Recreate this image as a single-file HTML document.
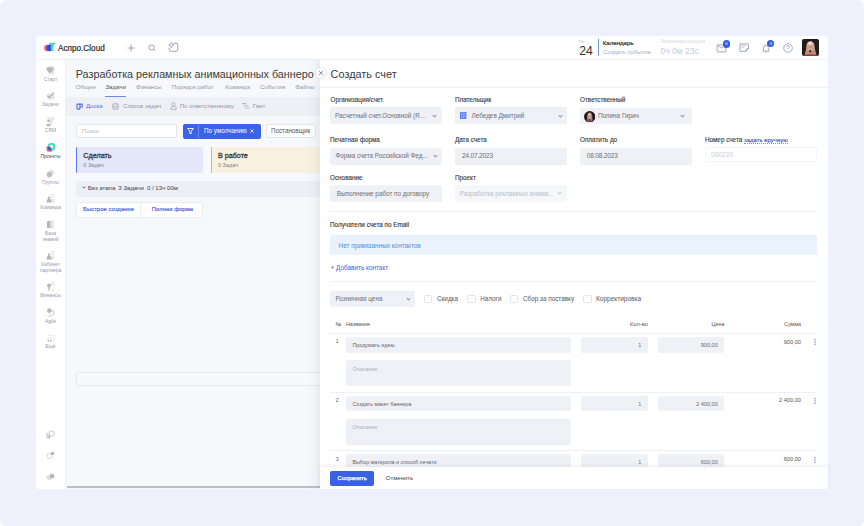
<!DOCTYPE html>
<html><head><meta charset="utf-8">
<style>
*{box-sizing:border-box}
html,body{margin:0;padding:0}
body{width:864px;height:526px;overflow:hidden;background:#fff;position:relative;font-family:"Liberation Sans",sans-serif;color:#333}
.a{position:absolute}
.t{position:absolute;white-space:nowrap;line-height:1}
#outer{left:0;top:0;width:864px;height:526px;background:#eef0fb;border-radius:6px}
#win{left:36px;top:36px;width:792px;height:453px;background:#fff;border-radius:3px;overflow:hidden}
#hdr{left:36px;top:36px;width:792px;height:24px;border-bottom:1px solid #eceef4;background:#fff;border-radius:3px 3px 0 0}
#side{left:36px;top:60px;width:30px;height:429px;background:#fff;border-right:1px solid #eef0f5;border-radius:0 0 0 3px}
#main{left:66px;top:60px;width:254px;height:429px;background:#f7f8fc;overflow:hidden}
#modal{left:320px;top:60px;width:508px;height:429px;background:#fff;border-radius:0 0 3px 0;overflow:hidden}
.lbl{font-size:6.35px;color:#3a3a3a;-webkit-text-stroke:0.12px #3a3a3a}
.inp{position:absolute;background:#f0f1f6;border-radius:2px}
.it{font-size:6.35px;color:#6c6f77}
.chev{position:absolute;width:3px;height:3px;border-right:0.8px solid #8d93a5;border-bottom:0.8px solid #8d93a5;transform:rotate(45deg)}
.sl{font-size:5px;color:#979cab;text-align:center;width:30px;left:35.5px}
.cb{position:absolute;width:8.6px;height:8.2px;border:0.8px solid #e3e5ec;border-radius:1.5px;background:#fff}
.tab{position:absolute;top:83.6px;font-size:6.1px;color:#959aa6}
.tbt{font-size:6.1px;color:#9297a3;top:102.9px}
.tb{font-size:5.4px;color:#555}
</style></head><body>
<div id="outer" class="a"></div>
<div id="win" class="a"></div>

<!-- HEADER -->
<div id="hdr" class="a"></div>
<svg class="a" style="left:42px;top:40px" width="16" height="13" viewBox="0 0 16 13">
  <circle cx="5.3" cy="8" r="3.2" fill="#fb5a78"/>
  <path d="M6.3 4.8 L7.9 2.8 L13.9 2.8 C12.6 4 11.6 5.2 11.5 6.6 C11.4 8 11.5 9.6 11.6 10.9 L8.9 10.9 L8.9 4.8 Z" fill="#3fe0b5"/>
  <path d="M9.1 4.8 L7.6 4.8 A3.2 3.2 0 0 0 7.6 11.2 L9.3 11.2 C8.7 9.2 8.7 6.8 9.1 4.8 Z" fill="#2a4ce2"/>
</svg>
<div class="t" style="left:58px;top:44.6px;font-size:8.2px;color:#2b2b2b;-webkit-text-stroke:0.2px #2b2b2b">Аспро.Cloud</div>
<svg class="a" style="left:126.5px;top:43.5px" width="8" height="8" viewBox="0 0 8 8"><path d="M4 .5V7.5M.5 4H7.5" stroke="#8f97b3" stroke-width="0.9"/></svg>
<svg class="a" style="left:147.5px;top:44.2px" width="8" height="8" viewBox="0 0 8 8"><circle cx="3.6" cy="3.5" r="2.7" fill="none" stroke="#8f97b3" stroke-width="0.9"/><path d="M5.6 5.5L6.9 6.8" stroke="#8f97b3" stroke-width="0.9" stroke-linecap="round"/></svg>
<svg class="a" style="left:168px;top:42px" width="11" height="10" viewBox="0 0 11 10"><path d="M5.4 1.3H8A1.8 1.8 0 0 1 9.8 3.1V7.5A1.8 1.8 0 0 1 8 9.3H3A1.8 1.8 0 0 1 1.2 7.5V6" fill="none" stroke="#8f97b3" stroke-width="0.9"/><path d="M3.4 0.5Q3.7 2.8 6 3.1Q3.7 3.4 3.4 5.7Q3.1 3.4 0.8 3.1Q3.1 2.8 3.4 0.5Z" fill="none" stroke="#8f97b3" stroke-width="0.75" stroke-linejoin="round"/></svg>

<div class="t" style="left:578.8px;top:39.8px;font-size:4.4px;color:#b7bcc8">Пн</div>
<div class="t" style="left:579.3px;top:44.5px;font-size:12.2px;color:#333">24</div>
<div class="a" style="left:597.5px;top:39px;width:1.2px;height:17px;background:#6a9ad9"></div>
<div class="t" style="left:602.8px;top:40.3px;font-size:6.1px;color:#2f2f2f;-webkit-text-stroke:0.2px #2f2f2f">Календарь</div>
<div class="t" style="left:603px;top:48.9px;font-size:6px;color:#a3b0c9">Создать событие</div>
<div class="t" style="left:660.6px;top:39.3px;font-size:5px;color:#d5d9e3">Запрачено сегодня</div>
<div class="t" style="left:660.5px;top:46.5px;font-size:8.3px;color:#c6ccda;letter-spacing:0.1px">0ч 0м 23с</div>

<svg class="a" style="left:716px;top:43.6px" width="11" height="9" viewBox="0 0 11 9"><rect x="1.1" y="0.9" width="8.8" height="7" rx="0.7" fill="none" stroke="#8f97b3" stroke-width="0.85"/><path d="M1.6 1.6L5.5 3.9L9.4 1.6" fill="none" stroke="#8f97b3" stroke-width="0.85"/></svg>
<div class="a" style="left:722.8px;top:40.2px;width:7.4px;height:7.4px;border-radius:50%;background:#2f5de6;color:#fff;font-size:4.2px;text-align:center;line-height:7.4px">6</div>
<svg class="a" style="left:738.5px;top:43.2px" width="10" height="9" viewBox="0 0 10 9"><path d="M1 .9H9.4V5.9L6.9 8.4H1Z" fill="none" stroke="#8f97b3" stroke-width="0.85" stroke-linejoin="round"/><path d="M2.5 2.8H7.2M2.5 4.3H4.6" fill="none" stroke="#a9b0c6" stroke-width="0.7"/><path d="M6.9 8.3V6.7A.8.8 0 0 1 7.7 5.9H9.3" fill="none" stroke="#8f97b3" stroke-width="0.8"/></svg>
<svg class="a" style="left:762px;top:43.5px" width="8" height="9" viewBox="0 0 8 9"><path d="M4 1.2a2.4 2.4 0 0 1 2.4 2.4V6l1 1H.6l1-1V3.6A2.4 2.4 0 0 1 4 1.2z M3 8h2" fill="none" stroke="#8f97b3" stroke-width="0.8"/></svg>
<div class="a" style="left:767px;top:39.8px;width:7.4px;height:7.4px;border-radius:50%;background:#2f5de6;color:#fff;font-size:4.2px;text-align:center;line-height:7.4px">3</div>
<svg class="a" style="left:783px;top:42.8px" width="10" height="10" viewBox="0 0 10 10"><circle cx="5" cy="5" r="4.3" fill="none" stroke="#8f97b3" stroke-width="0.8"/><path d="M3.6 3.9a1.4 1.4 0 1 1 2 1.3c-.5.3-.6.6-.6 1.1" fill="none" stroke="#8f97b3" stroke-width="0.8"/><circle cx="5" cy="7.4" r="0.45" fill="#8f97b3"/></svg>
<svg class="a" style="left:802px;top:39.3px" width="17" height="17" viewBox="0 0 17 17"><defs><clipPath id="avc"><rect width="17" height="17" rx="2"/></clipPath><linearGradient id="hg" x1="0" y1="0" x2="0" y2="1"><stop offset="0" stop-color="#dcc0ae"/><stop offset="1" stop-color="#b08068"/></linearGradient></defs><g clip-path="url(#avc)"><rect width="17" height="17" fill="#231a1e"/><path d="M8.4 2.2C5.6 2.2 4.6 4.6 4.4 7.6C4.2 11 3 14 2.2 17H14.8C14 14 12.8 11 12.6 7.6C12.4 4.6 11.2 2.2 8.4 2.2Z" fill="url(#hg)"/><ellipse cx="8.4" cy="9" rx="2.4" ry="3.6" fill="#cfa592"/><ellipse cx="7.9" cy="4.6" rx="1.7" ry="1.3" fill="#f3e6dc"/><path d="M6.9 8.1H7.8M9 8.1H9.9" stroke="#6b4a44" stroke-width=".5"/><ellipse cx="8.3" cy="12.2" rx="1" ry="1.2" fill="#3a2226"/><path d="M1 16.2C4 15.4 13 15.4 16 16.2V17H1Z" fill="#8a3038" opacity=".85"/></g></svg>
<!-- SIDEBAR -->
<div id="side" class="a"></div>
<!-- sidebar icons -->
<svg class="a" style="left:46px;top:66px" width="9" height="9" viewBox="0 0 9 9"><rect x="2.5" y="0.3" width="6" height="8.2" rx="0.8" fill="#e5e6e9"/><path d="M4 7.2C1.6 5.6.6 4.6.6 3.3a1.6 1.6 0 0 1 3.4-.8 1.6 1.6 0 0 1 3.4.8C7.4 4.6 6.4 5.6 4 7.2z" fill="#b5b7bc"/></svg>
<div class="t sl" style="top:77.3px">Старт</div>
<svg class="a" style="left:46px;top:91px" width="9" height="9" viewBox="0 0 9 9"><rect x="1.5" y="2.8" width="7" height="5.8" rx="0.8" fill="#e5e6e9"/><path d="M1 4.6L3.2 6.8L7.8 1.6" fill="none" stroke="#b0b2b7" stroke-width="1.3"/></svg>
<div class="t sl" style="top:102.4px">Задачи</div>
<svg class="a" style="left:44px;top:114px" width="14" height="14" viewBox="0 0 14 14"><path d="M2 3.4H11.4L8.2 7.8V11.6H5.6V7.8Z" fill="#e5e6e9"/><circle cx="4.5" cy="7" r="1.25" fill="#b3b5ba"/><path d="M2.5 12.2V11.5A1.9 1.7 0 0 1 6.3 11.5V12.2Z" fill="#b3b5ba"/></svg>
<div class="t sl" style="top:127.8px">CRM</div>
<svg class="a" style="left:45.5px;top:142.8px" width="10" height="10" viewBox="0 0 10 10"><path d="M0.5 3.8H5.35V8.7H2.8Q0.5 8.7 0.5 6.2Z" fill="#fb5a78"/><circle cx="5.35" cy="3.8" r="2.9" fill="none" stroke="#3ddfb2" stroke-width="2.1"/><path d="M2.45 3.8A2.9 2.9 0 0 0 5.35 6.7" fill="none" stroke="#2a4ce2" stroke-width="2.1"/></svg>
<div class="t sl" style="top:154px;color:#4d5058">Проекты</div>
<svg class="a" style="left:46px;top:168.8px" width="9" height="9" viewBox="0 0 9 9"><circle cx="5.6" cy="3.2" r="2.8" fill="#e5e6e9"/><circle cx="3.4" cy="5.6" r="2.8" fill="#bcbec2"/></svg>
<div class="t sl" style="top:180.1px">Группы</div>
<svg class="a" style="left:46px;top:194px" width="9" height="9" viewBox="0 0 9 9"><circle cx="6.4" cy="1.8" r="1.5" fill="none" stroke="#cfd0d4" stroke-width=".7"/><path d="M4.8 8.6V6.4A1.8 1.8 0 0 1 8.4 6.4V8.6z" fill="#e5e6e9"/><circle cx="3" cy="3.8" r="1.3" fill="#b5b7bc"/><path d="M.6 8.6V7.2A2.4 2.4 0 0 1 5.4 7.2V8.6z" fill="#b5b7bc"/></svg>
<div class="t sl" style="top:204.6px">Команда</div>
<svg class="a" style="left:46px;top:219.8px" width="9" height="9" viewBox="0 0 9 9"><rect x="1" y="1" width="4.6" height="7" rx=".5" fill="#b5b7bc"/><rect x="4.4" y=".5" width="3.6" height="8" rx=".5" fill="#e5e6e9"/></svg>
<div class="t sl" style="top:230.6px">База</div>
<div class="t sl" style="top:236.6px">знаний</div>
<svg class="a" style="left:46px;top:251px" width="9" height="9" viewBox="0 0 9 9"><circle cx="6.4" cy="1.8" r="1.5" fill="none" stroke="#cfd0d4" stroke-width=".7"/><path d="M4.8 8.6V6.4A1.8 1.8 0 0 1 8.4 6.4V8.6z" fill="#e5e6e9"/><circle cx="3" cy="3.8" r="1.3" fill="#b5b7bc"/><path d="M.6 8.6V7.2A2.4 2.4 0 0 1 5.4 7.2V8.6z" fill="#b5b7bc"/></svg>
<div class="t sl" style="top:261.6px">Кабинет</div>
<div class="t sl" style="top:267.8px">партнера</div>
<svg class="a" style="left:46px;top:282px" width="9" height="9" viewBox="0 0 9 9"><circle cx="6.6" cy="1.9" r="1.5" fill="none" stroke="#cfd0d4" stroke-width=".7"/><circle cx="3" cy="3.4" r="1.9" fill="#b5b7bc"/><rect x="2.3" y="4.8" width="1.4" height="3.8" fill="#b5b7bc"/><path d="M5 8.4h3" stroke="#d6d7da" stroke-width=".8"/></svg>
<div class="t sl" style="top:292.9px">Финансы</div>
<svg class="a" style="left:46px;top:307.5px" width="9" height="9" viewBox="0 0 9 9"><circle cx="3.4" cy="2.6" r="2.3" fill="#b5b7bc"/><path d="M3.2 7H5.8A2.2 2.2 0 0 0 5.8 2.6H5" fill="none" stroke="#d4d5d8" stroke-width="1.1"/><path d="M1.4 8.4H6" stroke="#e4e5e7" stroke-width="1"/></svg>
<div class="t sl" style="top:318.9px">Agile</div>
<svg class="a" style="left:46.5px;top:334px" width="8" height="8" viewBox="0 0 8 8"><g fill="#c6c7cb"><circle cx="1.2" cy="1.2" r=".55"/><circle cx="4" cy="1.2" r=".55"/><circle cx="6.8" cy="1.2" r=".55"/><circle cx="1.2" cy="4" r=".55"/><circle cx="4" cy="4" r=".55"/><circle cx="6.8" cy="4" r=".55"/><circle cx="6.8" cy="6.8" r=".55"/></g><g fill="#7e8084"><circle cx="1.2" cy="6.8" r=".7"/><circle cx="4" cy="6.8" r=".7"/></g></svg>
<div class="t sl" style="top:344px">Ещё</div>
<svg class="a" style="left:46px;top:430px" width="9" height="9" viewBox="0 0 9 9"><circle cx="5.6" cy="3.6" r="2.6" fill="none" stroke="#d2d3d6" stroke-width="1.1"/><rect x=".3" y="2.8" width="1.5" height="5.6" fill="#d0d1d4"/><rect x="2.4" y="4.8" width="1.7" height="3.6" fill="#b3b5b9"/></svg>
<svg class="a" style="left:46px;top:451px" width="9" height="9" viewBox="0 0 9 9"><circle cx="3.6" cy="5" r="2.5" fill="none" stroke="#d6d7da" stroke-width="1.7" stroke-dasharray="1.2 .7"/><circle cx="6.5" cy="2.5" r="1.8" fill="#b5b7bb"/></svg>
<svg class="a" style="left:46px;top:471.5px" width="9" height="9" viewBox="0 0 9 9"><path d="M.4 5.6Q.4 3.2 3.2 3.2H5V8H3.4L1.6 9L2 7.6Q.4 7.2 .4 5.6Z" fill="#dfe0e3"/><circle cx="6" cy="4.2" r="2.4" fill="#b5b7bb"/></svg>

<!-- MAIN -->
<div id="main" class="a">
</div>
<div class="a" style="left:66px;top:60px;width:254px;height:429px;overflow:hidden">
 <div style="position:absolute;left:-66px;top:-60px;width:864px;height:526px">
  <div class="a" style="left:75.8px;top:66px;width:238.7px;height:16px;overflow:hidden"><div class="t" style="left:0;top:3.2px;font-size:10.75px;color:#3b3b3b">Разработка рекламных анимационных баннеров</div></div>
  <div class="t tab" style="left:75.8px">Общие</div>
  <div class="t tab" style="left:105.4px;color:#545760">Задачи</div>
  <div class="t tab" style="left:136px">Финансы</div>
  <div class="t tab" style="left:171.8px">Порядок работ</div>
  <div class="t tab" style="left:225.2px">Команда</div>
  <div class="t tab" style="left:260px">События</div>
  <div class="t tab" style="left:295.2px">Файлы</div>
  <div class="a" style="left:0;top:97px;width:864px;height:18.7px;background:#eef0f5"></div>
  <div class="a" style="left:105.4px;top:95.6px;width:20.8px;height:1.2px;background:#6f88ea"></div>
  <svg class="a" style="left:75.6px;top:102.6px" width="7" height="7" viewBox="0 0 7 7"><path d="M1 1.1H6.2V4H3.9V5.4A.7.7 0 0 1 3.2 6.1H1.7A.7.7 0 0 1 1 5.4Z M3.9 1.1V4" fill="none" stroke="#4a6ee8" stroke-width="1.05" stroke-linejoin="round"/></svg>
  <div class="t" style="left:85.9px;top:102.9px;font-size:6.1px;color:#5573e6">Доска</div>
  <svg class="a" style="left:112px;top:102.5px" width="7" height="7" viewBox="0 0 7 7"><rect x=".7" y=".7" width="5.6" height="5.6" rx=".9" fill="#d9dce2" stroke="#b3b8c3" stroke-width=".9"/><path d="M.8 4H6.2" stroke="#b3b8c3" stroke-width=".8"/></svg>
  <div class="t tbt" style="left:123px">Список задач</div>
  <svg class="a" style="left:169.5px;top:101.6px" width="7" height="8" viewBox="0 0 7 8"><circle cx="3.5" cy="2.2" r="1.7" fill="none" stroke="#aeb3be" stroke-width=".9"/><path d="M.7 7.4V6.6A2 2 0 0 1 2.7 4.6H4.3A2 2 0 0 1 6.3 6.6V7.4Z" fill="none" stroke="#aeb3be" stroke-width=".9"/></svg>
  <div class="t tbt" style="left:179.7px">По ответственному</div>
  <svg class="a" style="left:242px;top:102.6px" width="8" height="6" viewBox="0 0 8 6"><path d="M0 .6H4.6M1.6 2.8H6.4M3.2 5H7.6" stroke="#aeb3be" stroke-width=".9"/></svg>
  <div class="t tbt" style="left:252.7px">Гант</div>

  <div class="a" style="left:76.2px;top:124.3px;width:101.1px;height:14px;background:#fff;border:0.7px solid #e4e6ec;border-radius:2px"></div>
  <div class="t" style="left:81.8px;top:128.2px;font-size:6.1px;color:#b3b8c4">Поиск</div>
  <div class="a" style="left:182.8px;top:124px;width:78px;height:14.7px;background:#3b62e8;border-radius:2px"></div>
  <svg class="a" style="left:187.3px;top:128px" width="7" height="6" viewBox="0 0 7 6"><path d="M.6 .5H6.4L4.2 3.1V5.6H2.8V3.1Z" fill="none" stroke="#fff" stroke-width=".9" stroke-linejoin="round"/></svg>
  <div class="a" style="left:198.2px;top:125px;width:0.6px;height:12.8px;background:#6c8bf0"></div>
  <div class="t" style="left:204.1px;top:128.2px;font-size:6.3px;color:#fff">По умолчанию</div>
  <svg class="a" style="left:250.3px;top:129.3px" width="4" height="4" viewBox="0 0 4 4"><path d="M.4 .4L3.6 3.6M3.6 .4L.4 3.6" stroke="#fff" stroke-width=".8"/></svg>
  <div class="a" style="left:265.7px;top:124.3px;width:50.2px;height:14px;background:#fff;border:0.7px solid #e4e6ec;border-radius:2px"></div>
  <div class="t" style="left:270.9px;top:128.2px;font-size:6.3px;color:#55585f">Постановщик</div>

  <div class="a" style="left:76.2px;top:147.3px;width:127.1px;height:25.6px;background:#e3e7f8;border-left:1.6px solid #5b7be8;border-radius:1px"></div>
  <div class="t" style="left:83.3px;top:152px;font-size:7.2px;color:#3a3c42;-webkit-text-stroke:0.3px #3a3c42">Сделать</div>
  <div class="t" style="left:83.3px;top:162.9px;font-size:5.6px;color:#80848d">0 Задач</div>
  <div class="a" style="left:210.9px;top:147.4px;width:200px;height:25.2px;background:#f8f1df;border-left:1.6px solid #f4b52c;border-radius:1px"></div>
  <div class="t" style="left:217.9px;top:152px;font-size:7.2px;color:#3a3c42;-webkit-text-stroke:0.3px #3a3c42">В работе</div>
  <div class="t" style="left:217.9px;top:162.9px;font-size:5.6px;color:#80848d">0 Задач</div>

  <div class="a" style="left:76.2px;top:180.5px;width:300px;height:16.3px;background:#eceff5;border-radius:2px"></div>
  <svg class="a" style="left:81.6px;top:186.2px" width="4" height="3" viewBox="0 0 4 3"><path d="M.4 .5L2 2.2L3.6 .5" fill="none" stroke="#555" stroke-width=".8"/></svg>
  <div class="t" style="left:87.8px;top:185.4px;font-size:6.1px;color:#5d6068;-webkit-text-stroke:0.1px #5d6068">Без этапа<span style="margin-left:3px">3 Задачи</span><span style="margin-left:3px">0 / 13ч 00м</span></div>

  <div class="a" style="left:76.2px;top:201.6px;width:127.1px;height:16.2px;background:#fff;border:0.7px solid #eaecf1;border-radius:2px"></div>
  <div class="a" style="left:139.5px;top:202px;width:0.7px;height:15.4px;background:#eaecf1"></div>
  <div class="t" style="left:83px;top:206.5px;font-size:5.95px;color:#4a60d8;-webkit-text-stroke:0.15px #4a60d8">Быстрое создание</div>
  <div class="t" style="left:151.8px;top:206.5px;font-size:5.95px;color:#4a60d8;-webkit-text-stroke:0.15px #4a60d8">Полная форма</div>

  <div class="a" style="left:75.6px;top:371.6px;width:300px;height:14.4px;background:#f8f9fc;border:0.7px solid #e8eaf0;border-radius:2px"></div>
  <div class="a" style="left:66.9px;top:486px;width:300px;height:2.2px;background:#bdbec4"></div>
 </div>
</div>
<div class="a" style="left:306px;top:60px;width:14px;height:429px;background:linear-gradient(to right,rgba(30,40,80,0),rgba(30,40,80,.025) 60%,rgba(30,40,80,.065))"></div>

<!-- MODAL -->
<div id="modal" class="a"></div>
<div class="t" style="left:330.6px;top:69.2px;font-size:10.9px;color:#3b3b3b">Создать счет</div>
<div class="a" style="left:320px;top:87px;width:508px;height:1px;background:#eef0f5"></div>
<div class="a" style="left:314.5px;top:67px;width:12px;height:12px;border-radius:50%;background:#fff;border:0.7px solid #e6e9f0"></div>
<svg class="a" style="left:317.5px;top:70px" width="6" height="6" viewBox="0 0 6 6"><path d="M.8 .8L5.2 5.2M5.2 .8L.8 5.2" stroke="#7f8cb5" stroke-width=".9"/></svg>

<div class="t lbl" style="left:330.6px;top:96.6px">Организация/счет</div>
<div class="t lbl" style="left:454.9px;top:96.6px">Плательщик</div>
<div class="t lbl" style="left:580px;top:96.6px">Ответственный</div>
<div class="inp" style="left:330.2px;top:107.4px;width:111.8px;height:16.7px"></div>
<div class="t it" style="left:335px;top:112.6px">Расчетный счет.Основной (R...</div>
<div class="chev" style="left:433.4px;top:113.6px"></div>
<div class="inp" style="left:454.9px;top:107.4px;width:111.8px;height:16.7px"></div>
<svg class="a" style="left:460.3px;top:112.3px" width="6.4" height="7" viewBox="0 0 6.4 7"><rect x="0" y="0" width="6.4" height="7" rx=".6" fill="#4f74ee"/><path d="M1.4 6.4V1h3.6v5.4M2.4 2.2h1.6M2.4 3.4h1.6M2.8 6.4V4.8h.8v1.6" fill="none" stroke="#dfe6ff" stroke-width=".5"/></svg>
<div class="t it" style="left:471.6px;top:112.6px">Лебедев Дмитрий</div>
<div class="chev" style="left:558.6px;top:113.6px"></div>
<div class="inp" style="left:580px;top:107.8px;width:111.9px;height:16.7px"></div>
<svg class="a" style="left:584px;top:110.6px" width="11.4" height="11.4" viewBox="0 0 17 17"><defs><clipPath id="avc2"><circle cx="8.5" cy="8.5" r="8.5"/></clipPath></defs><g clip-path="url(#avc2)"><rect width="17" height="17" fill="#221a1e"/><path d="M8.5 2.4C5.6 2.4 4.6 5 4.6 8.5L4 17H13L12.4 8.5C12.4 5 11.4 2.4 8.5 2.4Z" fill="#8e6a62"/><ellipse cx="8.5" cy="9.2" rx="3" ry="4.6" fill="#c29a8e"/><ellipse cx="8.3" cy="5" rx="1.8" ry="1.6" fill="#ead8ce"/><ellipse cx="8.2" cy="13.2" rx="1.3" ry="1.4" fill="#3a2226"/><path d="M2 16C5 14.8 12 14.8 15 16V17H2Z" fill="#7a2c34"/></g></svg>
<div class="t it" style="left:597.9px;top:112.9px">Полина Гирич</div>
<div class="chev" style="left:681px;top:114px"></div>

<div class="t lbl" style="left:330px;top:137px">Печатная форма</div>
<div class="t lbl" style="left:454.9px;top:137px">Дата счета</div>
<div class="t lbl" style="left:580px;top:137px">Оплатить до</div>
<div class="t lbl" style="left:704.9px;top:137px">Номер счета <span style="color:#3f62e6;font-size:6px;border-bottom:0.6px dotted #8a90a8">задать вручную</span></div>
<div class="inp" style="left:330px;top:147.8px;width:111.9px;height:17.1px"></div>
<div class="t it" style="left:335.4px;top:153.2px">Форма счета Российской Фед...</div>
<div class="chev" style="left:433.6px;top:154.2px"></div>
<div class="inp" style="left:454.9px;top:147.8px;width:111.8px;height:17.1px"></div>
<div class="t it" style="left:461.9px;top:152.9px;font-size:6.6px;letter-spacing:-0.2px">24.07.2023</div>
<div class="inp" style="left:580px;top:147.8px;width:111.5px;height:17.1px"></div>
<div class="t it" style="left:586.7px;top:152.9px;font-size:6.6px;letter-spacing:-0.2px">08.08.2023</div>
<div class="a" style="left:704.9px;top:147.4px;width:111.8px;height:14.3px;border:0.7px solid #f4f5f8;border-radius:2px;background:#fff"></div>
<div class="t" style="left:711px;top:152.2px;font-size:6.6px;color:#c9ccd5">000220</div>

<div class="t lbl" style="left:330px;top:175.2px">Основание</div>
<div class="t lbl" style="left:454.9px;top:175.2px">Проект</div>
<div class="inp" style="left:330px;top:185px;width:111.9px;height:17.2px"></div>
<div class="t it" style="left:336.7px;top:191.2px">Выполнение работ по договору</div>
<div class="inp" style="left:454.9px;top:185px;width:111.8px;height:17.2px;background:#f6f7fa"></div>
<div class="t it" style="left:459.8px;top:191.2px;color:#b8bcc6">Разработка рекламных анима...</div>
<div class="chev" style="left:558.4px;top:191.4px;border-color:#c3c7d2"></div>

<div class="a" style="left:330px;top:211.2px;width:486.7px;height:1px;background:#f0f1f5"></div>
<div class="t lbl" style="left:330px;top:222px;color:#333">Получатели счета по Email</div>
<div class="a" style="left:330px;top:234.8px;width:486.7px;height:20px;background:#eaf3fd;border-radius:2px"></div>
<div class="t" style="left:338.6px;top:243px;font-size:6.4px;color:#4b8fe2">Нет привязанных контактов</div>
<div class="t" style="left:330.5px;top:264.9px;font-size:6.4px;color:#4263e2">+ Добавить контакт</div>
<div class="a" style="left:330px;top:281px;width:486.7px;height:1px;background:#eef0f5"></div>

<div class="inp" style="left:330px;top:290.6px;width:84.8px;height:16.7px"></div>
<div class="t it" style="left:335.4px;top:295.6px">Розничная цена</div>
<div class="chev" style="left:406.5px;top:296.8px"></div>
<div class="cb" style="left:423.7px;top:294.7px"></div>
<div class="t it" style="left:437px;top:295.6px;color:#55585f">Скидка</div>
<div class="cb" style="left:467px;top:294.7px"></div>
<div class="t it" style="left:480.2px;top:295.6px;color:#55585f">Налоги</div>
<div class="cb" style="left:509.7px;top:294.7px"></div>
<div class="t it" style="left:523px;top:295.6px;color:#55585f">Сбор за поставку</div>
<div class="cb" style="left:583px;top:294.7px"></div>
<div class="t it" style="left:596px;top:295.6px;color:#55585f;font-size:6.5px">Корректировка</div>

<div class="t tb" style="left:335.4px;top:322px">№</div>
<div class="t tb" style="left:345.9px;top:322px">Название</div>
<div class="t tb" style="left:600px;top:322px;width:47.8px;text-align:right;font-size:5.7px">Кол-во</div>
<div class="t tb" style="left:680px;top:322px;width:44.4px;text-align:right">Цена</div>
<div class="t tb" style="left:760px;top:322px;width:41px;text-align:right">Сумма</div>
<div class="a" style="left:330px;top:332.8px;width:486.7px;height:1px;background:#eceef4"></div>
<div class="t tb" style="left:335.6px;top:338.9px;color:#6a6d74;font-size:5.8px">1</div>
<div class="inp" style="left:345.9px;top:337.3px;width:225px;height:15.4px"></div>
<div class="t tb" style="left:352.4px;top:342.5px;color:#63666d">Продумать идею</div>
<div class="inp" style="left:345.9px;top:360.0px;width:225px;height:25.9px"></div>
<div class="t tb" style="left:352.4px;top:367.1px;color:#a9aebb">Описание</div>
<div class="inp" style="left:581px;top:337.3px;width:66.5px;height:15.4px"></div>
<div class="t tb" style="left:600px;top:342.5px;width:41.3px;text-align:right;color:#6a6d75">1</div>
<div class="inp" style="left:658.3px;top:337.3px;width:65.7px;height:15.4px"></div>
<div class="t tb" style="left:660px;top:342.5px;width:57.9px;text-align:right;color:#6a6d75;font-size:5.65px">900,00</div>
<div class="t tb" style="left:740px;top:339.5px;width:61px;text-align:right;font-size:5.65px">900,00</div>
<svg class="a" style="left:814px;top:338.9px" width="2" height="6" viewBox="0 0 2 6"><g fill="#6d7bb2"><circle cx="1" cy=".8" r=".7"/><circle cx="1" cy="3" r=".7"/><circle cx="1" cy="5.2" r=".7"/></g></svg>
<div class="a" style="left:330px;top:392.1px;width:486.7px;height:1px;background:#eef0f5"></div>
<div class="t tb" style="left:335.6px;top:397.7px;color:#6a6d74;font-size:5.8px">2</div>
<div class="inp" style="left:345.9px;top:396.1px;width:225px;height:15.4px"></div>
<div class="t tb" style="left:352.4px;top:402px;color:#63666d">Создать макет баннера</div>
<div class="inp" style="left:345.9px;top:418.8px;width:225px;height:25.9px"></div>
<div class="t tb" style="left:352.4px;top:425.1px;color:#a9aebb">Описание</div>
<div class="inp" style="left:581px;top:396.1px;width:66.5px;height:15.4px"></div>
<div class="t tb" style="left:600px;top:402px;width:41.3px;text-align:right;color:#6a6d75">1</div>
<div class="inp" style="left:658.3px;top:396.1px;width:65.7px;height:15.4px"></div>
<div class="t tb" style="left:660px;top:402px;width:57.9px;text-align:right;color:#6a6d75;font-size:5.65px">2 400,00</div>
<div class="t tb" style="left:740px;top:398.3px;width:61px;text-align:right;font-size:5.65px">2 400,00</div>
<svg class="a" style="left:814px;top:397.7px" width="2" height="6" viewBox="0 0 2 6"><g fill="#6d7bb2"><circle cx="1" cy=".8" r=".7"/><circle cx="1" cy="3" r=".7"/><circle cx="1" cy="5.2" r=".7"/></g></svg>
<div class="a" style="left:330px;top:450.2px;width:486.7px;height:1px;background:#eef0f5"></div>
<div class="t tb" style="left:335.6px;top:456.8px;color:#6a6d74;font-size:5.8px">3</div>
<div class="inp" style="left:345.9px;top:454.2px;width:225px;height:15.4px"></div>
<div class="t tb" style="left:352.4px;top:460.4px;color:#63666d">Выбор материла и способ печати</div>
<div class="inp" style="left:581px;top:454.2px;width:66.5px;height:15.4px"></div>
<div class="t tb" style="left:600px;top:460.4px;width:41.3px;text-align:right;color:#6a6d75">1</div>
<div class="inp" style="left:658.3px;top:454.2px;width:65.7px;height:15.4px"></div>
<div class="t tb" style="left:660px;top:460.4px;width:57.9px;text-align:right;color:#6a6d75;font-size:5.65px">600,00</div>
<div class="t tb" style="left:740px;top:457.4px;width:61px;text-align:right;font-size:5.65px">600,00</div>
<svg class="a" style="left:814px;top:456.6px" width="2" height="6" viewBox="0 0 2 6"><g fill="#6d7bb2"><circle cx="1" cy=".8" r=".7"/><circle cx="1" cy="3" r=".7"/><circle cx="1" cy="5.2" r=".7"/></g></svg>
<div class="a" style="left:320px;top:467px;width:508px;height:22px;background:#fff;box-shadow:0 -2px 4px rgba(30,40,80,.06);border-radius:0 0 3px 0"></div>
<div class="a" style="left:330.2px;top:471px;width:44.3px;height:15.1px;background:#3a60e6;border-radius:2px"></div>
<div class="t" style="left:337.5px;top:476px;font-size:5.9px;color:#fff;-webkit-text-stroke:0.25px #fff">Сохранить</div>
<div class="t" style="left:385.8px;top:475.2px;font-size:6px;color:#444">Отменить</div>

</body></html>
